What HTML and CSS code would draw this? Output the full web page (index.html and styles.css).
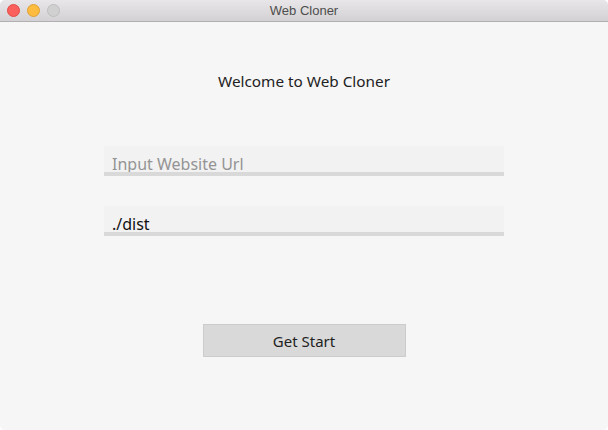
FILE: index.html
```html
<!DOCTYPE html>
<html>
<head>
<meta charset="utf-8">
<link rel="stylesheet" href="styles.css">
</head>
<body>
<div class="window">
  <div class="titlebar">
    <div class="lights">
      <span class="light close"></span>
      <span class="light min"></span>
      <span class="light max"></span>
    </div>
    <div class="title">Web Cloner</div>
  </div>
  <div class="content">
    <h1 class="welcome">Welcome to Web Cloner</h1>
    <div class="field first"><input class="input" type="text" placeholder="Input Website Url"></div>
    <div class="field second"><input class="input" type="text" value="./dist"></div>
    <button class="start">Get Start</button>
  </div>
</div>
</body>
</html>
```
FILE: styles.css
```css
html, body { margin: 0; padding: 0; background: #ffffff; }
body { width: 608px; height: 430px; overflow: hidden; font-family: "Noto Sans", "Open Sans", sans-serif; }
.window {
  width: 608px; height: 430px; box-sizing: border-box;
  background: #f6f6f6; border-radius: 5px; overflow: hidden;
  display: flex; flex-direction: column;
}
.titlebar {
  height: 22px; box-sizing: border-box;
  background: linear-gradient(#e8e6e8, #d3d1d3);
  border-bottom: 1px solid #b1afb1;
  position: relative; display: flex; align-items: center; justify-content: center;
}
.lights { position: absolute; left: 7px; top: 4px; display: flex; gap: 7px; }
.light { width: 13px; height: 13px; border-radius: 50%; box-sizing: border-box; }
.close { background: #fc605c; border: 1px solid #de4a46; }
.min { background: #fdbc40; border: 1px solid #dea033; }
.max { background: #d0d0d0; border: 1px solid #bdbdbd; }
.title { font-family: "Liberation Sans", Arial, sans-serif; font-size: 13px; color: #4d4d4d; }
.content { flex: 1; display: flex; flex-direction: column; align-items: center; }
.welcome { margin: 49px 0 0; font-size: 15.3px; font-weight: 400; color: #222; line-height: 20px; }
.field { width: 400px; }
.field.first { margin-top: 55px; }
.field.second { margin-top: 30px; }
.input {
  display: block; width: 400px; height: 30px; box-sizing: border-box; margin: 0;
  border: 0; border-bottom: 4px solid #d9d9d9; background: #f2f2f2;
  padding: 10px 8px 0; line-height: 16px; font-family: "Noto Sans", "Open Sans", sans-serif; font-size: 16px; color: #111;
  outline: none;
}
.input::placeholder { color: #949494; }
.start {
  margin-top: 88px; width: 203px; height: 33px; box-sizing: border-box;
  background: #d9d9d9; border: 1px solid #cccccc; border-radius: 0;
  font-family: "Noto Sans", "Open Sans", sans-serif; font-size: 15px; color: #222; padding: 0;
}
```
